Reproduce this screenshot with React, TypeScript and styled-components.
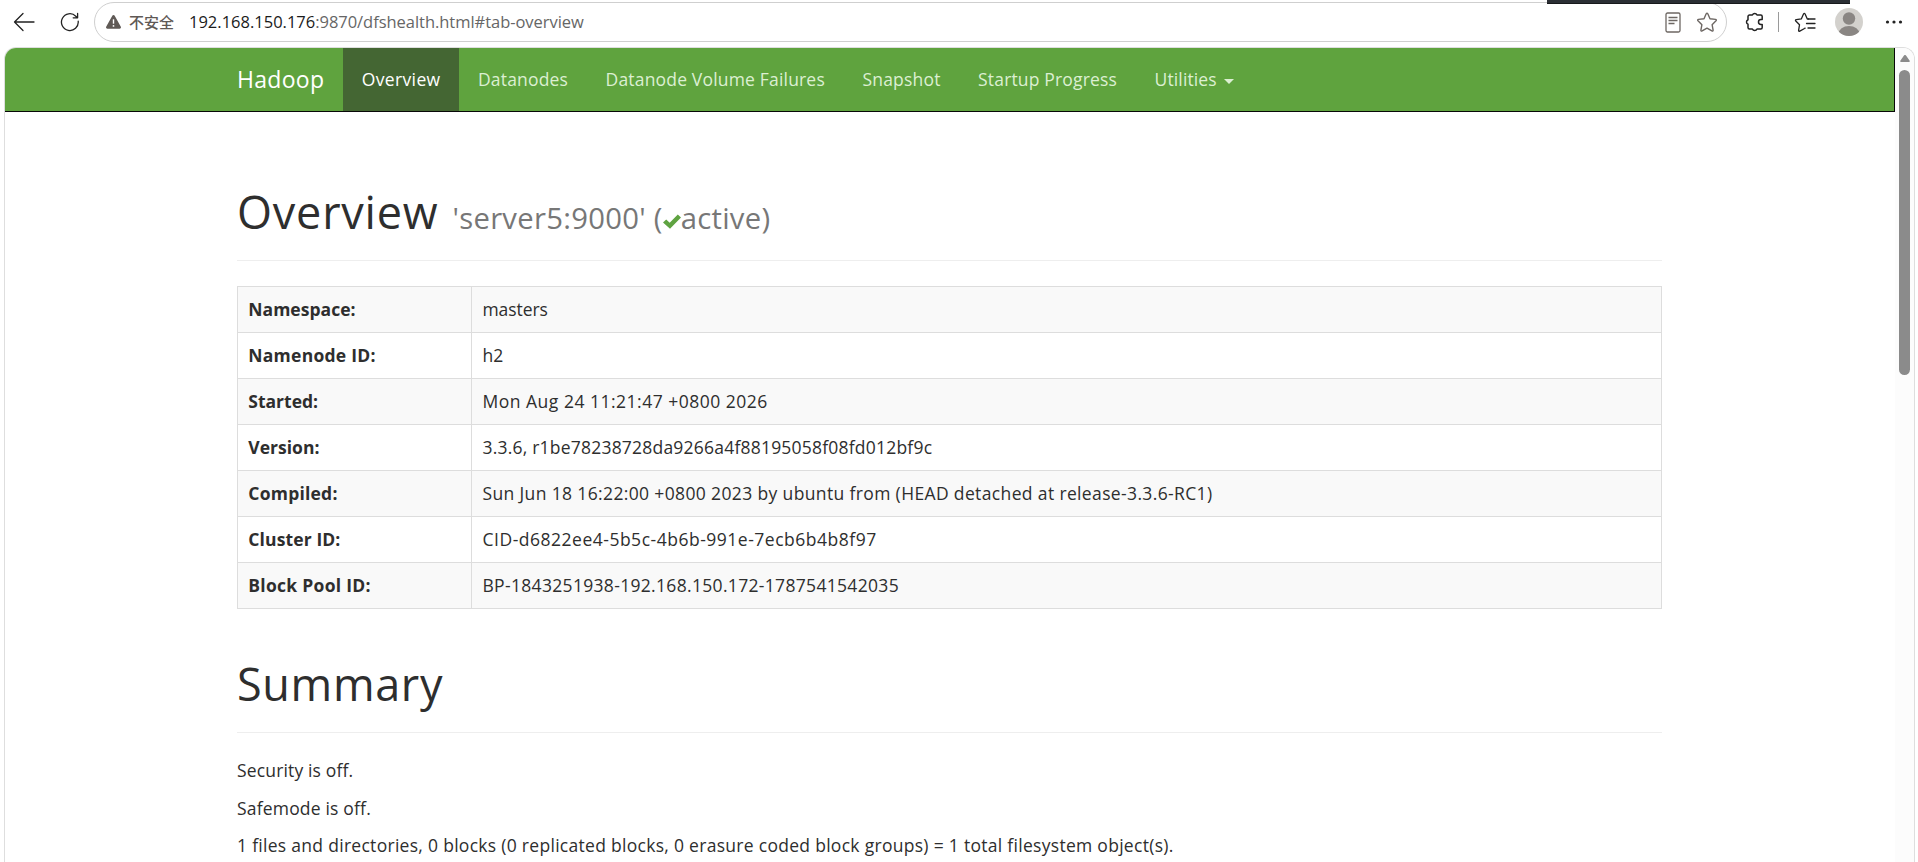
import React from "react";
import styled, { createGlobalStyle } from "styled-components";

const GlobalStyle = createGlobalStyle`
  * { box-sizing: border-box; }
  body { margin: 0; background: #fff; overflow: hidden; }
`;

const Window = styled.div`
  position: relative;
  display: flex;
  flex-direction: column;
  width: 100%;
  height: 862px;
  overflow: hidden;
  background: #fff;
  color: #2e2e2e;
  font: 400 17.5px/25px "Open Sans", "Noto Sans", "Noto Sans CJK SC", sans-serif;
`;

/* Edge of the window that floats above the browser */
const FloatingEdge = styled.div`
  position: absolute;
  top: 0;
  left: 1547px;
  width: 303px;
  height: 4px;
  background: #2b2f34;
  border-bottom: 1px solid #17191b;
`;

const Toolbar = styled.header`
  display: flex;
  align-items: flex-start;
  flex: none;
  height: 47px;
  padding: 2px 12px 0 13px;
`;

const ToolIcon = styled.span<{ $width: number; $gap?: number }>`
  display: flex;
  flex: none;
  align-items: center;
  justify-content: center;
  width: ${(p) => p.$width}px;
  height: 40px;
  margin-left: ${(p) => p.$gap ?? 0}px;
  svg { display: block; flex: none; }
`;

const AddressBar = styled.div`
  display: flex;
  align-items: center;
  flex: none;
  width: 1633px;
  height: 40px;
  margin-left: 14px;
  padding: 0 8px 0 11px;
  border: 1px solid #cfcfcf;
  border-radius: 20px;
`;

const SecurityLabel = styled.span`
  width: 60px;
  margin-left: 8px;
  color: #5f5955;
  font: 500 15px/20px "Noto Sans CJK SC", sans-serif;
`;

const Url = styled.span`
  flex: 1;
  color: #1b1b1b;
  font-size: 16.5px;
  line-height: 22px;
  padding-bottom: 1px;
  span { color: #666; letter-spacing: -0.04px; }
`;

const Divider = styled.span`
  width: 1px;
  height: 20px;
  margin: 10px 0 0 14px;
  background: #9a9a9a;
`;

const Viewport = styled.div`
  display: flex;
  flex: 1;
  min-height: 0;
  width: 1911px;
  margin-left: 4px;
  border: 1px solid #dedede;
  border-bottom: 0;
  border-radius: 12px 12px 0 0;
  overflow: hidden;
`;

const Page = styled.div`
  flex: 1;
  min-width: 0;
`;

const NavBar = styled.nav`
  display: flex;
  height: 64px;
  padding-left: 213.25px;
  background: #5fa33e;
  border-right: 1px solid #080808;
  border-bottom: 1px solid #080808;
`;

const Brand = styled.a`
  padding: 19px 18.75px;
  color: #fff;
  font-size: 23px;
  letter-spacing: 0.29px;
`;

const NavLink = styled.a<{ $active?: boolean; $track: number }>`
  display: flex;
  padding: 18.5px 18.75px;
  color: ${(p) => (p.$active ? "#fff" : "#dcefd2")};
  background: ${(p) => (p.$active ? "#446633" : "transparent")};
  letter-spacing: ${(p) => p.$track}px;
  white-space: nowrap;
`;

const Caret = styled.span`
  margin: 12px 0 0 7.5px;
  width: 10px;
  height: 5px;
  border: 5px solid transparent;
  border-top-color: currentColor;
  border-bottom: 0;
`;

const Content = styled.main`
  width: 1425px;
  margin-left: 232px;
`;

const PageHeader = styled.div<{ $top: number }>`
  height: 74px;
  margin: ${(p) => p.$top}px 0 25px;
  border-bottom: 1px solid #eee;
`;

const Title = styled.h1<{ $track: number }>`
  margin: 0;
  font-size: 45px;
  font-weight: 400;
  line-height: 49.5px;
  letter-spacing: ${(p) => p.$track}px;
  white-space: nowrap;
`;

const SubTitle = styled.small`
  margin-left: 1.5px;
  color: #777;
  font-size: 29.25px;
  line-height: 1;
  letter-spacing: 0.28px;
`;

const InfoTable = styled.table`
  width: 100%;
  border-collapse: collapse;
  table-layout: fixed;
`;

const InfoRow = styled.tr`
  height: 46px;
  &:nth-child(odd) { background: #f9f9f9; }
`;

const HeadCell = styled.th<{ $track: number }>`
  width: 234px;
  padding: 10px 10px 10px 10.3px;
  border: 1px solid #ddd;
  text-align: left;
  font-weight: 700;
  letter-spacing: ${(p) => p.$track}px;
`;

const DataCell = styled.td<{ $track: number }>`
  padding: 10px 10px 10px 10.5px;
  border: 1px solid #ddd;
  letter-spacing: ${(p) => p.$track}px;
`;

const Paragraph = styled.p<{ $track: number }>`
  margin: 0 0 12.5px;
  letter-spacing: ${(p) => p.$track}px;
  white-space: nowrap;
`;

const ScrollTrack = styled.div`
  display: flex;
  flex-direction: column;
  align-items: center;
  flex: none;
  width: 19px;
  padding-top: 7px;
  background: #fcfcfc;
`;

const ScrollThumb = styled.div`
  width: 11px;
  height: 305px;
  margin-top: 8px;
  border-radius: 6px;
  background: #8b8b8b;
`;

const links = [
  { label: "Overview", track: 0.35, active: true },
  { label: "Datanodes", track: 0.17 },
  { label: "Datanode Volume Failures", track: 0.18 },
  { label: "Snapshot", track: 0.2 },
  { label: "Startup Progress", track: 0.16 },
  { label: "Utilities", track: 0.14, menu: true },
];

const rows: { name: string; nameTrack: number; value: string; track: number }[] = [
  { name: "Namespace:", nameTrack: 0.03, value: "masters", track: -0.08 },
  { name: "Namenode ID:", nameTrack: 0.26, value: "h2", track: 0.1 },
  { name: "Started:", nameTrack: 0, value: "Mon Aug 24 11:21:47 +0800 2026", track: 0.5 },
  { name: "Version:", nameTrack: 0.02, value: "3.3.6, r1be78238728da9266a4f88195058f08fd012bf9c", track: 0.21 },
  { name: "Compiled:", nameTrack: 0.22, value: "Sun Jun 18 16:22:00 +0800 2023 by ubuntu from (HEAD detached at release-3.3.6-RC1)", track: 0.36 },
  { name: "Cluster ID:", nameTrack: 0.12, value: "CID-d6822ee4-5b5c-4b6b-991e-7ecb6b4b8f97", track: 0.51 },
  { name: "Block Pool ID:", nameTrack: 0.28, value: "BP-1843251938-192.168.150.172-1787541542035", track: 0.32 },
];

const BackIcon = () => (
  <svg width="22" height="20" viewBox="0 0 22 20" fill="none" stroke="#222" strokeWidth="1.3" strokeLinecap="round" strokeLinejoin="round">
    <path d="M21 10H1.5M10 1.5 1.5 10l8.5 8.5" />
  </svg>
);

const RefreshIcon = () => (
  <svg width="20" height="20" viewBox="0 0 20 20" fill="none" stroke="#222" strokeWidth="1.3" strokeLinecap="round" strokeLinejoin="round">
    <path d="M18.2 9.2A8.4 8.4 0 1 1 15.8 4.2L17.4 5.8M17.6 1.4V5.8H13.2" />
  </svg>
);

const WarningIcon = () => (
  <svg width="15" height="14" viewBox="0 0 15 14">
    <path d="M6.3.8a1.4 1.4 0 0 1 2.4 0l6 10.8A1.4 1.4 0 0 1 13.5 13.8H1.5A1.4 1.4 0 0 1 .3 11.6Z" fill="#605a56" />
    <path d="M7.5 4.3v4.4" stroke="#fff" strokeWidth="1.4" />
    <circle cx="7.5" cy="10.9" r=".9" fill="#fff" />
  </svg>
);

const ReaderIcon = () => (
  <svg width="16" height="21" viewBox="0 0 16 21" fill="none" stroke="#6d6763" strokeWidth="1.3">
    <rect x="1" y="1" width="14" height="19" rx="1.5" />
    <path d="M3.5 5.5h9M3.5 8.5h9M3.5 11.5h6" />
  </svg>
);

const StarIcon = () => (
  <svg width="22" height="21" viewBox="0 0 22 21" fill="none" stroke="#6d6763" strokeWidth="1.4" strokeLinejoin="round">
    <path d="M10.2 1.8q.8-1.3 1.6 0L14 6.7l5.5.7q1.4.3.5 1.4l-3.900 3.900 1 5.400q.1 1.400-1.200.8L11 16.200l-4.900 2.700q-1.300.6-1.200-.8l1-5.400L2 8.800q-.9-1.100.5-1.400L8 6.700Z" />
  </svg>
);

const PuzzleIcon = () => (
  <svg width="20" height="22" viewBox="0 0 20 22" fill="none" stroke="#222" strokeWidth="1.5" strokeLinejoin="round">
    <path d="M5.500 4h2.900a2.500 2.500 0 0 1 4.600 0H16.700a1.500 1.500 0 0 1 1.500 1.500V8.600h-1.300a2.400 2.400 0 0 0 0 4.800h1.300v3.100a1.500 1.500 0 0 1-1.500 1.500H13a2.500 2.500 0 0 1-4.600 0H5.500a1.500 1.500 0 0 1-1.500-1.500v-3.200a2.500 2.500 0 0 1 0-4.600V5.500A1.500 1.500 0 0 1 5.500 4Z" />
  </svg>
);

const FavoritesIcon = () => (
  <svg width="22" height="21" viewBox="0 0 22 21" fill="none" stroke="#222" strokeWidth="1.3" strokeLinecap="round" strokeLinejoin="round">
    <path d="M14.500 7H13.300L11.100 2q-.8-1.300-1.600 0L7.300 6.900l-5 .7q-1.400.3-.5 1.400l3.700 3.800-.9 5.500q-.1 1.300 1.200.8l4.700-2.600.6-.4" />
    <path d="M14.500 7h6.500M12.500 11.500h8.500M14 16h7" />
  </svg>
);

const AvatarIcon = () => (
  <svg width="28" height="28" viewBox="0 0 28 28">
    <defs>
      <clipPath id="avatar-disc"><circle cx="14" cy="14" r="14" /></clipPath>
    </defs>
    <g clipPath="url(#avatar-disc)">
      <rect width="28" height="28" fill="#d3d1cd" />
      <circle cx="14" cy="10.5" r="6.2" fill="#8a8683" />
      <ellipse cx="14" cy="26" rx="10.5" ry="8" fill="#8a8683" />
    </g>
  </svg>
);

const MoreIcon = () => (
  <svg width="18" height="4" viewBox="0 0 18 4" fill="#222">
    <circle cx="2.5" cy="2" r="1.6" />
    <circle cx="9" cy="2" r="1.6" />
    <circle cx="15.5" cy="2" r="1.6" />
  </svg>
);

const CheckIcon = () => (
  <svg width="18" height="15" viewBox="0 0 18 15" fill="#5fa341">
    <path d="M0 8.500 3.200 5.400 6.700 8.800 14.800.5 18 3.600 7 14.800Z" />
  </svg>
);

const ScrollUpIcon = () => (
  <svg width="10" height="7" viewBox="0 0 10 7" fill="#8b8b8b">
    <path d="M4 .6a1.200 1.200 0 0 1 2 0l3.700 5.200Q10.100 7 9 7H1Q-.1 7 .3 5.800Z" />
  </svg>
);

export default function App() {
  return (
    <Window>
      <GlobalStyle />
      <Toolbar>
        <ToolIcon $width={22}><BackIcon /></ToolIcon>
        <ToolIcon $width={20} $gap={25}><RefreshIcon /></ToolIcon>
        <AddressBar>
          <WarningIcon />
          <SecurityLabel>不安全</SecurityLabel>
          <Url>192.168.150.176<span>:9870/dfshealth.html#tab-overview</span></Url>
          <ToolIcon $width={16}><ReaderIcon /></ToolIcon>
          <ToolIcon $width={22} $gap={15}><StarIcon /></ToolIcon>
        </AddressBar>
        <ToolIcon $width={20} $gap={17}><PuzzleIcon /></ToolIcon>
        <Divider />
        <ToolIcon $width={22} $gap={15}><FavoritesIcon /></ToolIcon>
        <ToolIcon $width={28} $gap={19}><AvatarIcon /></ToolIcon>
        <ToolIcon $width={18} $gap={22}><MoreIcon /></ToolIcon>
      </Toolbar>
      <Viewport>
        <Page>
          <NavBar>
            <Brand>Hadoop</Brand>
            {links.map((l) => (
              <NavLink key={l.label} $active={l.active} $track={l.track}>
                {l.label}
                {l.menu && <Caret />}
              </NavLink>
            ))}
          </NavBar>
          <Content>
            <PageHeader $top={75}>
              <Title $track={0.8}>
                Overview <SubTitle>'server5:9000' (<CheckIcon />active)</SubTitle>
              </Title>
            </PageHeader>
            <InfoTable>
              <tbody>
                {rows.map((r) => (
                  <InfoRow key={r.name}>
                    <HeadCell scope="row" $track={r.nameTrack}>{r.name}</HeadCell>
                    <DataCell $track={r.track}>{r.value}</DataCell>
                  </InfoRow>
                ))}
              </tbody>
            </InfoTable>
            <PageHeader $top={50}>
              <Title $track={0.65}>Summary</Title>
            </PageHeader>
            <Paragraph $track={0.15}>Security is off.</Paragraph>
            <Paragraph $track={0.18}>Safemode is off.</Paragraph>
            <Paragraph $track={0.29}>
              1 files and directories, 0 blocks (0 replicated blocks, 0 erasure coded block groups) = 1 total filesystem object(s).
            </Paragraph>
          </Content>
        </Page>
        <ScrollTrack>
          <ScrollUpIcon />
          <ScrollThumb />
        </ScrollTrack>
      </Viewport>
      <FloatingEdge />
    </Window>
  );
}
